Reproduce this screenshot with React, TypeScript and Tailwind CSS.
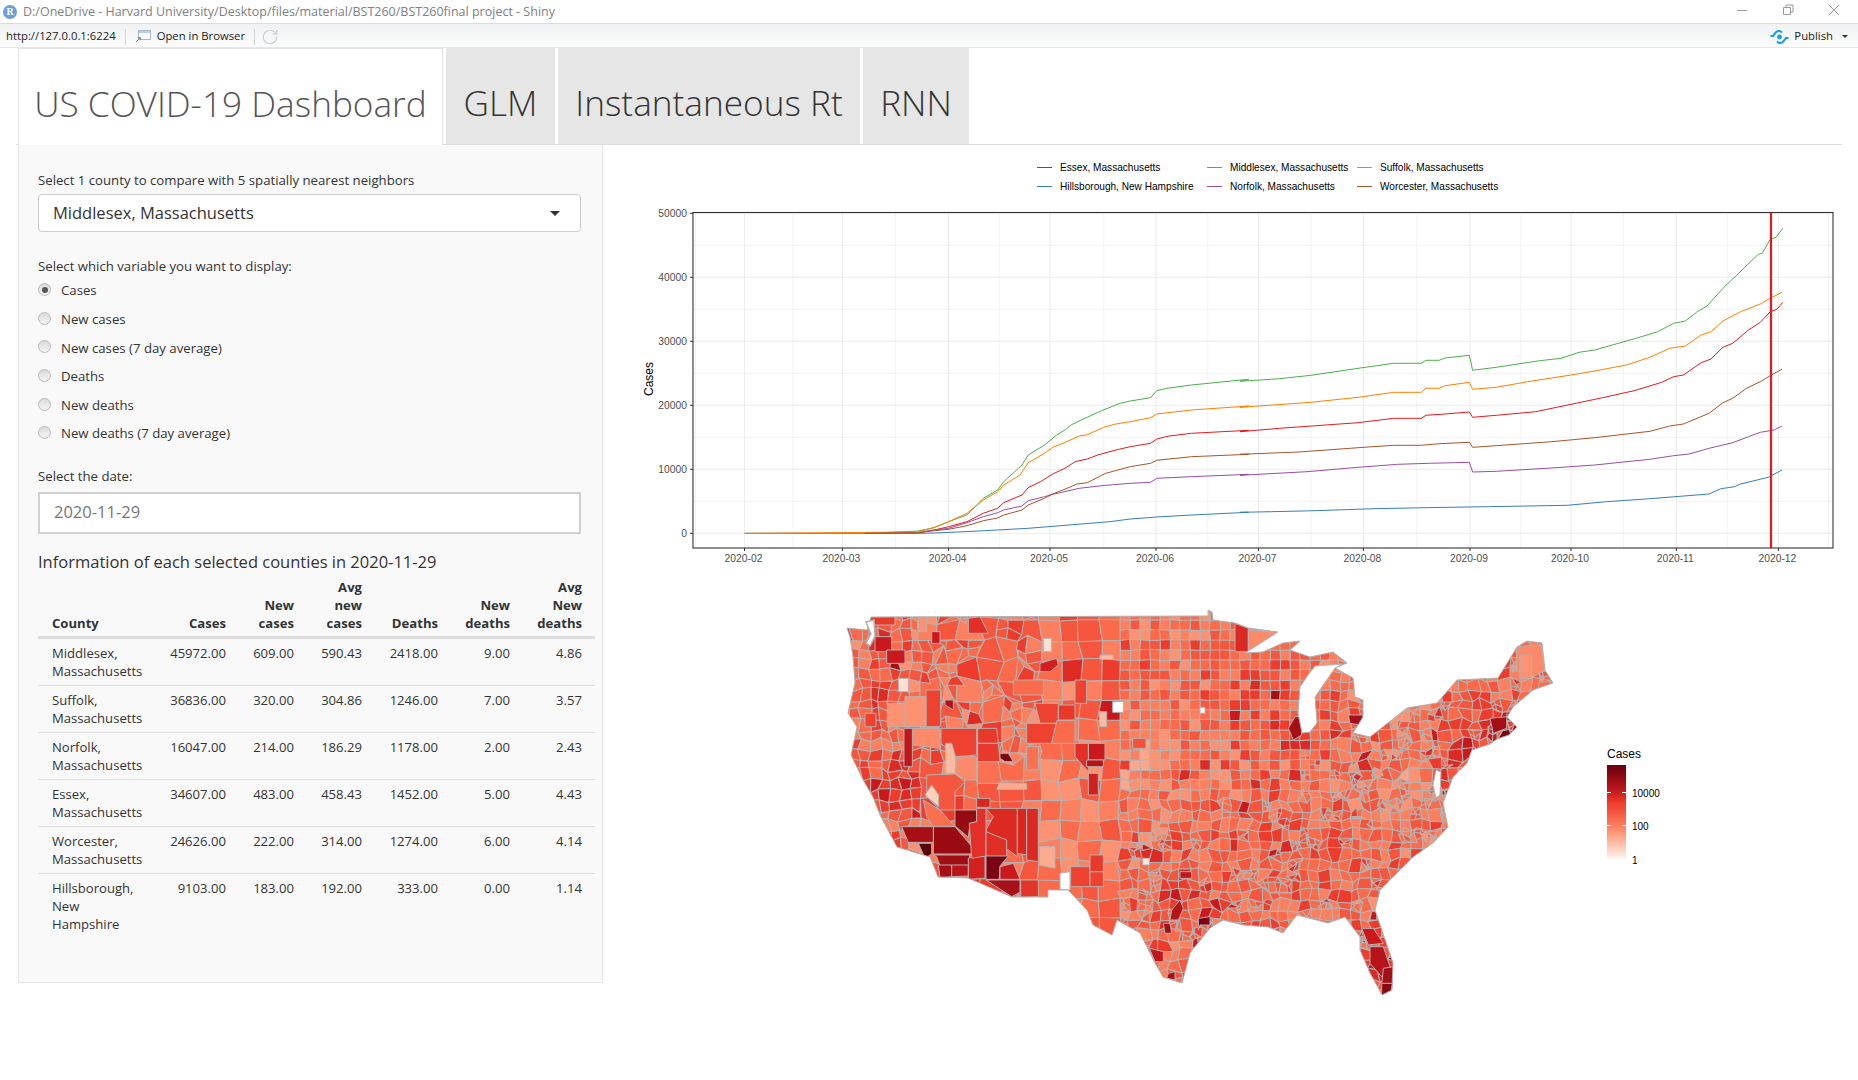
import { RotateCw } from 'lucide-react'

// --- plot helpers: coordinates were read off crops of the picture
const fromLeft = (l: number[]) => {
  const out: string[] = []
  for (let i = 0; i < l.length; i += 2) out.push(`${(620 + l[i] / 2.45).toFixed(1)},${(140 + l[i + 1] / 3).toFixed(1)}`)
  return out
}
const fromRight = (l: number[]) => {
  const out: string[] = []
  for (let i = 0; i < l.length; i += 2) out.push(`${(1240 + l[i] / 2.537).toFixed(1)},${(140 + l[i + 1] / 3).toFixed(1)}`)
  return out
}

const series = [
  {
    name: 'Essex',
    color: '#E41A1C',
    pts: [
      ...fromLeft([600,1180,730,1178,770,1170,805,1160,850,1145,890,1120,925,1105,940,1088,985,1065,1000,1043,1030,1025,1060,1002,1090,985,1115,965,1145,957,1170,945,1215,930,1250,920,1300,910,1315,897,1345,888,1400,880,1540,871]),
      ...fromRight([0,875,100,865,300,848,390,835,460,835,472,826,520,822,582,816,590,832,650,826,750,815,840,793,920,773,1000,752,1070,727,1100,710,1125,705,1170,668,1195,657,1225,622,1250,610,1290,570,1320,547,1345,515,1362,508,1377,487]),
    ],
  },
  {
    name: 'Hillsborough',
    color: '#377EB8',
    pts: [
      ...fromLeft([305,1180,730,1180,770,1179,880,1173,1000,1165,1100,1155,1200,1145,1250,1137,1315,1131,1400,1125,1540,1117]),
      ...fromRight([0,1117,80,1115,190,1112,340,1106,470,1103,630,1100,830,1096,930,1085,1040,1076,1190,1062,1220,1046,1255,1040,1270,1032,1340,1012,1375,990]),
    ],
  },
  {
    name: 'Middlesex',
    color: '#4DAF4A',
    pts: [
      ...fromLeft([640,1178,730,1173,770,1163,805,1145,850,1125,890,1075,925,1050,940,1025,985,975,1000,945,1040,915,1070,885,1090,870,1105,855,1130,840,1180,812,1225,790,1250,783,1300,773,1315,752,1340,745,1400,735,1540,718]),
      ...fromRight([0,724,100,716,180,706,300,685,390,670,460,670,472,661,505,661,520,654,582,646,590,691,650,682,760,662,815,655,860,637,900,630,960,610,1005,595,1060,575,1100,550,1130,543,1160,515,1185,498,1225,445,1265,400,1315,343,1325,340,1345,298,1360,292,1377,265]),
    ],
  },
  {
    name: 'Norfolk',
    color: '#984EA3',
    pts: [
      ...fromLeft([600,1180,730,1178,770,1170,805,1165,850,1148,890,1130,925,1118,940,1110,985,1098,1000,1082,1040,1070,1060,1063,1100,1052,1125,1045,1180,1037,1250,1030,1300,1027,1315,1015,1400,1010,1540,1003]),
      ...fromRight([0,1006,170,995,300,982,400,973,480,970,582,967,590,996,650,994,790,984,900,975,1040,958,1100,947,1140,942,1190,925,1250,908,1290,890,1320,877,1355,870,1375,858]),
    ],
  },
  {
    name: 'Suffolk',
    color: '#FF7F00',
    pts: [
      ...fromLeft([305,1180,730,1176,770,1162,805,1145,850,1120,890,1080,925,1055,940,1035,980,1005,1000,968,1040,940,1060,922,1085,910,1125,888,1145,884,1185,862,1215,852,1250,845,1300,833,1315,822,1400,810,1540,798]),
      ...fromRight([0,802,60,797,180,787,300,772,390,757,460,757,472,745,505,745,520,737,582,727,590,748,650,742,730,725,840,705,900,693,980,675,1040,652,1090,625,1130,618,1170,585,1195,575,1225,543,1270,515,1320,492,1345,475,1375,457]),
    ],
  },
  {
    name: 'Worcester',
    color: '#A65628',
    pts: [
      ...fromLeft([600,1180,730,1178,770,1172,805,1168,850,1157,890,1142,925,1134,940,1125,985,1110,1000,1095,1040,1075,1060,1062,1085,1050,1120,1032,1145,1028,1190,1000,1250,980,1300,970,1315,961,1400,950,1540,943]),
      ...fromRight([0,943,150,936,300,923,390,916,460,916,505,911,582,907,590,922,650,917,790,905,900,893,1040,874,1090,858,1125,852,1190,820,1225,788,1250,775,1285,745,1320,725,1345,707,1375,688]),
    ],
  },
]

const legend = [
  { x: 1037, y: 167, color: '#E41A1C', label: 'Essex, Massachusetts' },
  { x: 1207, y: 167, color: '#4DAF4A', label: 'Middlesex, Massachusetts' },
  { x: 1357, y: 167, color: '#FF7F00', label: 'Suffolk, Massachusetts' },
  { x: 1037, y: 186, color: '#377EB8', label: 'Hillsborough, New Hampshire' },
  { x: 1207, y: 186, color: '#984EA3', label: 'Norfolk, Massachusetts' },
  { x: 1357, y: 186, color: '#A65628', label: 'Worcester, Massachusetts' },
]

const months = [
  ['2020-02', 744.5], ['2020-03', 842.4], ['2020-04', 948.6], ['2020-05', 1050], ['2020-06', 1156], ['2020-07', 1258.5],
  ['2020-08', 1363.4], ['2020-09', 1470], ['2020-10', 1571], ['2020-11', 1676.3], ['2020-12', 1778.4],
] as const
const minorX = [695.5, 793, 895.5, 999.6, 1103.7, 1207.7, 1311, 1416.6, 1520.6, 1623.5, 1727.6, 1828.5]
const yTicks = [0, 10000, 20000, 30000, 40000, 50000]
const yAt = (v: number) => 533.3 - v * 0.0064

function LinePlot() {
  return (
    <svg viewBox="622 146 1220 454" className="block h-[454px] w-[1220px] font-['Liberation_Sans',sans-serif]">
      {legend.map((l) => (
        <g key={l.label}>
          <line x1={l.x} x2={l.x + 15} y1={l.y + 0.5} y2={l.y + 0.5} stroke={l.color} strokeWidth="1" />
          <text x={l.x + 23} y={l.y + 3.5} fontSize="10.1" fill="#000">{l.label}</text>
        </g>
      ))}
      {minorX.map((x) => <line key={x} x1={x} x2={x} y1={212} y2={548} stroke="#f0f0f0" strokeWidth="0.8" />)}
      {yTicks.slice(0, 5).map((v) => <line key={v} x1={693} x2={1833} y1={yAt(v + 5000)} y2={yAt(v + 5000)} stroke="#f0f0f0" strokeWidth="0.8" />)}
      {months.map(([m, x]) => <line key={m} x1={x} x2={x} y1={212} y2={548} stroke="#ebebeb" strokeWidth="1" />)}
      {yTicks.map((v) => <line key={v} x1={693} x2={1833} y1={yAt(v)} y2={yAt(v)} stroke="#ebebeb" strokeWidth="1" />)}
      {series.map((s) => (
        <polyline key={s.name} points={s.pts.join(' ')} fill="none" stroke={s.color} strokeWidth="1" />
      ))}
      <line x1={1771} x2={1771} y1={212} y2={548} stroke="#f0141a" strokeWidth="2.2" />
      <rect x={693} y={212.5} width={1140} height={335.5} fill="none" stroke="#333" strokeWidth="1.1" />
      {yTicks.map((v) => (
        <g key={v}>
          <line x1={690} x2={693} y1={yAt(v)} y2={yAt(v)} stroke="#333" />
          <text x={687} y={yAt(v) + 3.5} textAnchor="end" fontSize="10.3" fill="#4d4d4d">{v}</text>
        </g>
      ))}
      {months.map(([m, x]) => (
        <g key={m}>
          <line x1={x} x2={x} y1={548} y2={551} stroke="#333" />
          <text x={x - 1} y={562} textAnchor="middle" fontSize="10.3" fill="#4d4d4d">{m}</text>
        </g>
      ))}
      <text transform="translate(653 379) rotate(-90)" textAnchor="middle" fontSize="12" fill="#000">Cases</text>
    </svg>
  )
}

// --- map: a jittered county mesh clipped to the outline, darker shapes laid on top
const outline =
  '871,617 1208,616 1208,610 1212,612 1213,620 1235,623 1248,628 1278,632 1245,653 1263,652 1283,643 1300,641 1290,650 1310,657 1333,652 1347,663 1335,668 1353,678 1355,697 1363,700 1363,717 1353,733 1370,737 1407,708 1437,703 1457,680 1498,678 1517,647 1527,641 1542,643 1545,670 1553,683 1533,690 1513,707 1507,717 1517,727 1509,735 1497,739 1490,744 1472,750 1467,763 1453,777 1443,803 1448,827 1433,843 1413,857 1400,870 1380,890 1375,910 1393,963 1392,990 1382,995 1370,973 1360,950 1360,937 1345,917 1328,923 1297,915 1283,933 1268,927 1243,925 1223,920 1210,928 1190,953 1182,983 1163,977 1155,963 1140,933 1117,920 1112,935 1093,925 1087,910 1068,890 1048,890 1048,897 1012,897 968,878 938,877 930,857 897,847 880,815 873,797 862,778 851,755 857,727 848,713 855,683 853,657 850,637 847,628 867,630'
const lake = '1308,675 1315,666 1343,664 1335,668 1315,697 1317,723 1310,732 1302,733 1298,713 1300,687'
const bay = '1436,770 1441,772 1440,795 1436,798 1433,785'
const sound = '866,622 874,620 875,636 870,646 866,643 871,634'

const hash = (a: number, b: number, c: number) => {
  const h = Math.sin(a * 127.1 + b * 311.7 + c * 74.7) * 43758.5453
  return h - Math.floor(h)
}
const jitter = (x: number, y: number) => {
  if (x < 925) return 3
  if (x < 1040) return 5
  if (x < 1120) return 3
  if (x < 1340 && y < 780) return 0.7
  if (y > 790 || x > 1320) return 3.2
  return 1.6
}
const corner = (x: number, y: number) => {
  const a = jitter(x, y)
  return `${(x + (hash(x, y, 1) - 0.5) * 2 * a).toFixed(1)} ${(y + (hash(x, y, 2) - 0.5) * 2 * a).toFixed(1)}`
}
const shades = ['#fee0d2', '#fcbba1', '#fca68c', '#fc9272', '#fc8060', '#fb6a4a', '#f6563d', '#ef3b2c', '#dd2a25', '#cb181d', '#a50f15', '#7a0510']
const spots = [
  [1475, 735, 0.22, 20], [1445, 765, 0.16, 18], [1385, 970, 0.3, 24], [1295, 725, 0.22, 16], [1205, 925, 0.1, 14], [1170, 880, 0.1, 14],
  [1310, 855, 0.1, 30], [1505, 715, 0.24, 12], [1350, 715, 0.12, 14], [1260, 690, 0.08, 30], [1240, 850, 0.06, 60], [1140, 760, -0.1, 40],
  [888, 785, 0.32, 22], [870, 690, 0.16, 14], [880, 640, 0.22, 14], [1000, 650, 0.08, 40], [1400, 760, -0.08, 24],
]
const shadeAt = (x: number, y: number) => {
  let t = 0.44 + (hash(x, y, 3) - 0.5) * 0.34
  if (hash(x, y, 4) > (x < 1040 ? 0.97 : 0.93)) t += 0.2
  for (const [sx, sy, a, r] of spots) t += a * Math.exp(-((x - sx) ** 2 + (y - sy) ** 2) / (2 * r * r))
  return shades[Math.max(0, Math.min(shades.length - 1, Math.round(t * (shades.length - 1))))]
}

function buildMesh() {
  const byShade: Record<string, string[]> = {}
  const cell = (x: number, y: number, s: number) => {
    const c = x + s / 2
    let target = 10
    if (c < 925) target = 10
    else if (c < 1040) target = y < 760 && hash(x, y, 5) > 0.45 ? 10 : 20
    else if (c < 1120) target = 20
    else if (c > 1300 && c < 1440 && y > 740 && y < 840) target = hash(x, y, 6) > 0.7 ? 5 : 10
    else if ((y > 790 || c > 1340) && hash(x, y, 6) > 0.86) target = 5
    if (s > target) {
      const h = s / 2
      cell(x, y, h)
      cell(x + h, y, h)
      cell(x, y + h, h)
      cell(x + h, y + h, h)
      return
    }
    const key = shadeAt(x, y)
    ;(byShade[key] ||= []).push(`M${corner(x, y)}L${corner(x + s, y)}L${corner(x + s, y + s)}L${corner(x, y + s)}Z`)
  }
  for (let x = 840; x < 1560; x += 40) for (let y = 600; y < 1000; y += 40) cell(x, y, 40)
  return Object.entries(byShade).map(([fill, d]) => ({ fill, d: d.join('') }))
}
const mesh = buildMesh()

const westShapes: [string, string][] = [
  ['#e8392b', '120,50 195,50 195,75 120,75'],
  ['#cb181d', '135,110 185,110 185,155 135,155'],
  ['#cb181d', '170,150 225,150 225,190 170,190'],
  ['#cb181d', '305,95 330,95 330,130 305,130'],
  ['#fc9272', '265,50 290,50 290,95 265,95'],
  ['#e32f27', '415,55 450,50 475,100 415,100'],
  ['#fee0d2', '640,115 665,115 665,155 640,155'],
  ['#fee0d2', '205,235 235,235 235,275 205,275'],
  ['#d3201f', '630,190 680,175 685,195 660,215 630,215'],
  ['#ef4130', '288,270 332,270 332,380 288,380'],
  ['#fc9272', '172,310 225,310 240,380 172,380'],
  ['#fc9272', '225,290 288,290 288,380 225,380'],
  ['#ef4130', '105,340 138,340 138,380 105,380'],
  ['#b01217', '345,300 370,300 370,330 345,315'],
  ['#fb6a4a', '550,240 640,240 640,285 550,285'],
  ['#ef4130', '735,240 770,240 770,310 735,310'],
  ['#ef4130', '615,310 685,310 685,370 630,370'],
  ['#e8392b', '685,315 735,315 735,360 685,360'],
  ['#ef4130', '590,370 680,370 665,430 590,430'],
  ['#fb6a4a', '680,362 735,362 735,430 665,430'],
  ['#fc8a6a', '247,385 330,385 330,445 247,435'],
  ['#ef4130', '333,385 440,385 440,465 378,470 333,430'],
  ['#c2151c', '222,385 247,385 247,500 222,500'],
  ['#fcbba1', '347,430 365,430 378,475 375,520 347,520'],
  ['#fc8a6a', '378,475 440,470 440,540 405,540 378,520'],
  ['#f6563d', '290,525 375,522 405,545 375,575 375,630 330,630 290,590'],
  ['#fdd0bc', '285,585 305,555 326,585 326,620'],
  ['#fb7050', '280,600 330,630 375,680 310,680 290,650'],
  ['#960a12', '375,630 440,630 440,665 420,670 415,712 375,678'],
  ['#9b0a13', '310,680 375,680 430,745 422,762 310,762'],
  ['#a50f15', '215,680 310,680 310,727 235,727'],
  ['#5a0008', '265,730 305,730 305,762 285,775'],
  ['#a00d13', '310,765 420,765 415,797 330,797 320,770'],
  ['#a50f15', '325,795 365,795 365,830 330,833'],
  ['#b81319', '365,795 415,795 415,828 365,830'],
  ['#d3201f', '415,775 465,755 465,835 415,838'],
  ['#e32f27', '440,625 468,625 468,768 425,775 418,670 440,665'],
  ['#dc2a22', '468,625 562,625 562,770 535,750 490,740 468,690 490,650'],
  ['#e03026', '468,695 530,720 530,770 468,770'],
  ['#d9261f', '562,625 590,625 590,765 562,760'],
  ['#dc2a22', '590,625 625,625 625,785 590,780'],
  ['#7a0212', '468,768 535,768 510,798 508,838 468,838'],
  ['#cb181d', '510,800 550,790 570,838 510,838'],
  ['#a8101a', '468,840 570,840 570,877 545,890'],
  ['#e23527', '572,840 625,840 625,890 572,892'],
  ['#d9261f', '440,595 480,595 480,622 440,622'],
  ['#e8392b', '443,385 500,385 505,430 443,430'],
  ['#e8392b', '443,430 505,430 510,485 443,485'],
  ['#fb7050', '443,485 505,485 515,550 443,550'],
  ['#7a0a12', '510,460 535,460 550,485 525,485 510,475'],
  ['#fcab8f', '510,548 590,550 590,568 500,568'],
  ['#fb7050', '590,440 625,440 625,510 590,510'],
  ['#fcab8f', '628,740 675,740 675,805 628,795'],
  ['#ffffff', '690,820 720,815 720,870 690,868'],
  ['#ffffff', '848,305 880,305 880,337 848,337'],
  ['#ffffff', '1110,322 1125,322 1125,340 1110,340'],
  ['#ef4130', '722,800 780,800 780,860 722,860'],
  ['#ef4130', '780,815 820,815 820,860 780,860'],
  ['#e8392b', '780,765 820,765 820,815 780,815'],
  ['#cb181d', '775,430 825,430 825,480 775,480'],
  ['#e32f27', '735,430 775,430 775,515 735,470'],
  ['#b81319', '770,480 820,480 820,500 770,500'],
  ['#d3201f', '775,520 805,520 805,585 775,585'],
  ['#fcbba1', '808,335 830,335 830,380 808,380'],
  ['#fcbba1', '810,165 850,165 850,178 810,178'],
  ['#f4503a', '908,415 948,415 948,445 908,445'],
  ['#fee9df', '938,775 958,775 958,795 938,795'],
  ['#7a0212', '1105,955 1140,950 1140,975 1110,975 1105,990'],
  ['#a50f15', '1000,970 1020,970 1025,1000 1005,1000'],
  ['#b81319', '1025,930 1050,900 1060,925 1045,960 1020,960'],
  ['#c2151c', '1050,815 1085,815 1085,835 1050,835'],
  ['#c2151c', '958,1045 1000,1055 1000,1085 975,1085'],
  ['#a50f15', '1015,1120 1035,1115 1035,1140 1010,1135'],
]
const eastShapes: [string, string][] = [
  ['#dc2a22', '105,70 145,85 145,155 105,155'],
  ['#fc8a6a', '145,90 235,97 145,155'],
  ['#a50f15', '285,350 305,350 305,405 280,420 265,385'],
  ['#a50f15', '870,355 920,350 920,385 880,400'],
  ['#fc8a6a', '950,140 1025,135 1035,210 1000,230 950,210'],
  ['#fc9272', '960,165 995,165 995,235 960,235'],
  ['#cb181d', '485,985 520,985 550,1030 505,1035'],
  ['#c2151c', '515,935 530,935 530,960 510,960'],
  ['#b81319', '510,1040 550,1040 570,1100 545,1130 510,1090'],
  ['#a50f15', '550,1105 580,1100 580,1150 545,1155'],
  ['#8a0a10', '545,1150 578,1150 570,1185 545,1185'],
  ['#a50f15', '445,345 490,345 480,375 450,370'],
]

function CountyMap() {
  return (
    <svg viewBox="622 600 1220 410" className="block h-[410px] w-[1220px] font-['Liberation_Sans',sans-serif]">
      <defs>
        <clipPath id="usa"><polygon points={outline} /></clipPath>
        <linearGradient id="ramp" x1="0" x2="0" y1="0" y2="1">
          <stop offset="0" stopColor="#67000d" />
          <stop offset="0.25" stopColor="#b9141a" />
          <stop offset="0.4" stopColor="#ef3b2c" />
          <stop offset="0.65" stopColor="#fc8060" />
          <stop offset="0.85" stopColor="#fdc3ad" />
          <stop offset="1" stopColor="#fff5f0" />
        </linearGradient>
      </defs>
      <g clipPath="url(#usa)">
        <polygon points={outline} fill="#fb6a4a" />
        {mesh.map((m) => <path key={m.fill} d={m.d} fill={m.fill} stroke="#b3b3b3" strokeWidth="1.05" />)}
        <g transform="translate(830 600) scale(0.33333)" stroke="#b3b3b3" strokeWidth="3">
          {westShapes.map(([fill, pts]) => <polygon key={pts} points={pts} fill={fill} />)}
        </g>
        <g transform="translate(1200 600) scale(0.33333)" stroke="#b3b3b3" strokeWidth="3">
          {eastShapes.map(([fill, pts]) => <polygon key={pts} points={pts} fill={fill} />)}
        </g>
      </g>
      <polygon points={outline} fill="none" stroke="#b3b3b3" strokeWidth="1" />
      <polygon points={lake} fill="#fff" stroke="#b3b3b3" strokeWidth="1" />
      <polygon points={bay} fill="#fff" stroke="#b3b3b3" strokeWidth="1" />
      <polygon points={sound} fill="#fff" stroke="#b3b3b3" strokeWidth="1.5" />
      <text x={1607} y={758} fontSize="12" fill="#000">Cases</text>
      <rect x={1607} y={765} width={19} height={94} fill="url(#ramp)" />
      <line x1={1607} x2={1611} y1={792.5} y2={792.5} stroke="#fff" />
      <line x1={1622} x2={1626} y1={792.5} y2={792.5} stroke="#fff" />
      <line x1={1607} x2={1611} y1={825.5} y2={825.5} stroke="#fff" />
      <line x1={1622} x2={1626} y1={825.5} y2={825.5} stroke="#fff" />
      <text x={1632} y={797} fontSize="10" fill="#000">10000</text>
      <text x={1632} y={830} fontSize="10" fill="#000">100</text>
      <text x={1632} y={864} fontSize="10" fill="#000">1</text>
    </svg>
  )
}

// --- app chrome
function RLogo() {
  return (
    <span className="flex h-[14px] w-[14px] items-center justify-center rounded-full bg-[#6b9fd6] font-['Liberation_Serif',serif] text-[10px] font-bold text-white">
      R
    </span>
  )
}

function PublishIcon() {
  return (
    <svg width="19" height="14" viewBox="0 0 19 14" fill="none" stroke="#1a9fe6" strokeWidth="2.1">
      <path d="M0.5 6H3L6 2.2C7.5 0.8 10 0.8 12 2.5" />
      <path d="M18.5 8H16L13 11.8C11.5 13.2 9 13.2 7 11.5" />
      <circle cx="9.5" cy="7" r="2.4" fill="#1a9fe6" stroke="none" />
    </svg>
  )
}

function BrowserIcon() {
  return (
    <svg width="16" height="13" viewBox="0 0 16 13" fill="none">
      <rect x="3.5" y="0.5" width="12" height="9" fill="#fbfdff" stroke="#a9b8c8" />
      <rect x="4" y="1" width="11" height="2" fill="#b9d0ea" />
      <path d="M1 12L5 8M3 7.5H5.5V10" stroke="#8a8a8a" />
    </svg>
  )
}

function TitleBar() {
  return (
    <div className="flex h-[24px] items-center border-b border-[#dcdcdc] bg-white pl-[3px] font-['Open_Sans',sans-serif] text-[12.5px] text-[#808080]">
      <RLogo />
      <span className="ml-[6px] pt-px whitespace-nowrap">D:/OneDrive - Harvard University/Desktop/files/material/BST260/BST260final project - Shiny</span>
      <svg width="121" height="12" viewBox="0 0 121 12" fill="none" stroke="#999" className="mb-[3px] ml-auto">
        <path d="M0 6.5H10" />
        <path d="M46.5 3.5H53.5V10.5H46.5ZM49 3.5V1H56V8H53.5" />
        <path d="M92 1L102 11M102 1L92 11" />
      </svg>
    </div>
  )
}

function ToolBar() {
  return (
    <div className="flex h-[24px] items-center border-b border-[#e6e6e6] bg-gradient-to-b from-[#eff1f3] to-[#fcfcfc] pt-[2px] font-['Open_Sans',sans-serif] text-[11.3px] text-[#222]">
      <span className="ml-[6px]">http://127.0.0.1:6224</span>
      <span className="mx-[9px] h-[16px] w-px bg-[#d5d5d5]" />
      <BrowserIcon />
      <span className="ml-[6px]">Open in Browser</span>
      <span className="mx-[9px] h-[16px] w-px bg-[#d5d5d5]" />
      <RotateCw size={18} strokeWidth={1.6} className="-ml-[3px] text-[#ccd0d4]" />
      <div className="ml-auto flex items-center">
        <PublishIcon />
        <span className="ml-[5px]">Publish</span>
        <span className="mr-[10px] ml-[9px] h-0 w-0 border-x-[3px] border-t-[3px] border-x-transparent border-t-[#333]" />
      </div>
    </div>
  )
}

const tabs = [
  { label: 'US COVID-19 Dashboard', width: 'w-[425px]', active: true },
  { label: 'GLM', width: 'w-[109px]', active: false },
  { label: 'Instantaneous Rt', width: 'w-[302px]', active: false },
  { label: 'RNN', width: 'w-[106px]', active: false },
]

function Tabs() {
  return (
    <div className="mx-[16px] flex h-[97px] border-b border-[#ddd] pl-[2px] font-['Open_Sans',sans-serif] text-[35.2px] font-light">
      {tabs.map((t) =>
        t.active ? (
          <div key={t.label} className={`${t.width} -mb-px mr-[3px] flex items-center justify-center border-x border-t border-[#e3e3e3] bg-white pt-[12px] text-[#555]`}>
            {t.label}
          </div>
        ) : (
          <div key={t.label} className={`${t.width} mr-[3px] flex items-center justify-center bg-[#e6e6e6] pt-[12px] text-[#333]`}>
            {t.label}
          </div>
        ),
      )}
    </div>
  )
}

const radios = ['Cases', 'New cases', 'New cases (7 day average)', 'Deaths', 'New deaths', 'New deaths (7 day average)']

const rows = [
  ['Middlesex, Massachusetts', '45972.00', '609.00', '590.43', '2418.00', '9.00', '4.86'],
  ['Suffolk, Massachusetts', '36836.00', '320.00', '304.86', '1246.00', '7.00', '3.57'],
  ['Norfolk, Massachusetts', '16047.00', '214.00', '186.29', '1178.00', '2.00', '2.43'],
  ['Essex, Massachusetts', '34607.00', '483.00', '458.43', '1452.00', '5.00', '4.43'],
  ['Worcester, Massachusetts', '24626.00', '222.00', '314.00', '1274.00', '6.00', '4.14'],
  ['Hillsborough, New Hampshire', '9103.00', '183.00', '192.00', '333.00', '0.00', '1.14'],
]
const heads = ['County', 'Cases', 'New cases', 'Avg new cases', 'Deaths', 'New deaths', 'Avg New deaths']

function CountyTable() {
  return (
    <table className="mt-[5px] w-[557px] table-fixed border-collapse text-[13.1px] leading-[18px] text-[#333]">
      <colgroup>
        <col className="w-[116px]" />
        <col className="w-[85px]" />
        <col className="w-[68px]" />
        <col className="w-[68px]" />
        <col className="w-[76px]" />
        <col className="w-[72px]" />
        <col className="w-[72px]" />
      </colgroup>
      <thead>
        <tr className="border-b-[3px] border-[#ddd]">
          {heads.map((h, i) => (
            <th key={h} className={`pb-[4px] align-bottom font-bold ${i === 0 ? 'pr-0 pl-[14px] text-left' : 'px-[13px] text-right'}`}>
              {h}
            </th>
          ))}
        </tr>
      </thead>
      <tbody>
        {rows.map((r) => (
          <tr key={r[0]} className="border-b border-[#ddd] last:border-b-0">
            {r.map((c, i) => (
              <td key={i} className={`py-[5px] align-top ${i === 0 ? 'pr-[12px] pl-[14px] text-left' : 'px-[13px] text-right'}`}>
                {c}
              </td>
            ))}
          </tr>
        ))}
      </tbody>
    </table>
  )
}

function Sidebar() {
  return (
    <aside className="flex h-[838px] w-[585px] shrink-0 flex-col border border-t-0 border-[#e6e6e6] bg-[#f9f9f9] pt-[26px] pr-[21px] pl-[19px] font-['Open_Sans',sans-serif] text-[13.2px] text-[#333]">
      <label className="leading-[19px]">Select 1 county to compare with 5 spatially nearest neighbors</label>
      <div className="mt-[4px] flex h-[38px] items-center justify-between rounded-[4px] border border-[#ccc] bg-white pr-[20px] pl-[14px] text-[16.5px]">
        Middlesex, Massachusetts
        <span className="h-0 w-0 border-x-[5px] border-t-[5px] border-x-transparent border-t-[#333]" />
      </div>
      <label className="mt-[25px] leading-[19px]">Select which variable you want to display:</label>
      <div className="mt-[1px] flex flex-col">
        {radios.map((r, i) => (
          <div key={r} className="flex h-[28.6px] items-center">
            <span className="mb-[3px] flex h-[13px] w-[13px] items-center justify-center rounded-full border border-[#bbb] bg-gradient-to-b from-[#d9d9d9] to-[#f6f6f6]">
              {i === 0 && <span className="h-[6px] w-[6px] rounded-full bg-[#555]" />}
            </span>
            <span className="ml-[10px]">{r}</span>
          </div>
        ))}
      </div>
      <label className="mt-[18px] leading-[19px]">Select the date:</label>
      <div className="mt-[6px] flex h-[42px] items-center border-2 border-[#d0d0d0] bg-white pl-[14px] text-[16.5px] text-[#777]">2020-11-29</div>
      <h4 className="mt-[17px] text-[16.5px] leading-[22px] font-normal">Information of each selected counties in 2020-11-29</h4>
      <CountyTable />
    </aside>
  )
}

export default function App() {
  return (
    <div className="h-[1080px] w-[1858px] overflow-hidden bg-white">
      <TitleBar />
      <ToolBar />
      <Tabs />
      <div className="flex pl-[18px]">
        <Sidebar />
        <main className="mt-px ml-[19px] flex flex-col">
          <LinePlot />
          <CountyMap />
        </main>
      </div>
    </div>
  )
}
